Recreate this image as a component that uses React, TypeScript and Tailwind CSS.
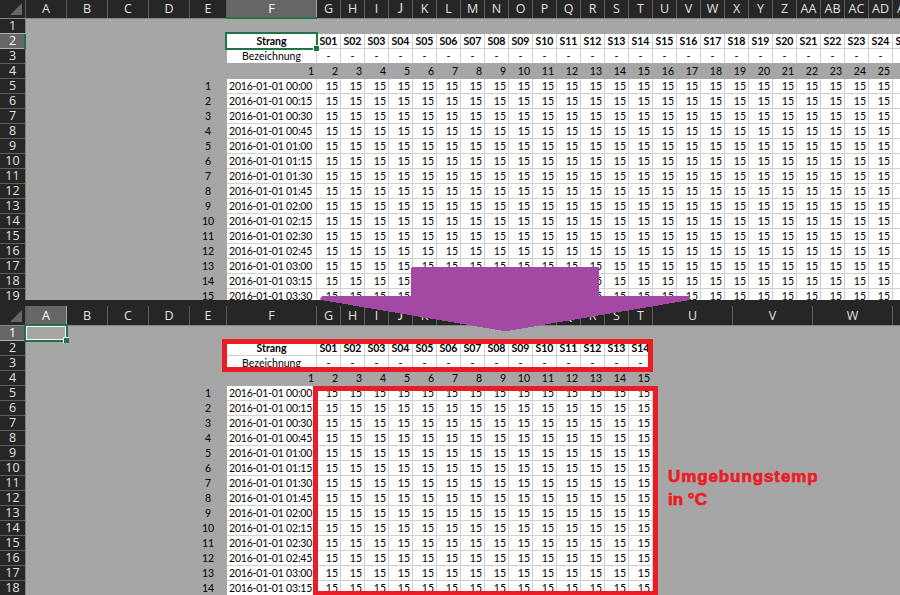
import React from "react";

type Column = { name: string; width: string };

const LEADING: Column[] = [
  { name: "A", width: "w-[41px]" },
  { name: "B", width: "w-[41px]" },
  { name: "C", width: "w-[41px]" },
  { name: "D", width: "w-[41px]" },
  { name: "E", width: "w-[37px]" },
  { name: "F", width: "w-[90px]" },
];

const narrow = (names: string[]): Column[] => names.map((name) => ({ name, width: "w-6" }));

const TOP_COLUMNS = [
  ...LEADING,
  ...narrow("G H I J K L M N O P Q R S T U V W X Y Z AA AB AC AD AE".split(" ")),
];

const BOTTOM_COLUMNS = [
  ...LEADING,
  ...narrow("G H I J K L M N O P Q R S T".split(" ")),
  { name: "U", width: "w-20" },
  { name: "V", width: "w-20" },
  { name: "W", width: "w-20" },
  { name: "", width: "w-2" },
];

const pad = (n: number) => String(n).padStart(2, "0");

const timestamp = (i: number) => `2016-01-01 ${pad(Math.floor(i / 4))}:${pad((i % 4) * 15)}`;

function HeaderCell({ col, selected }: { col: Column; selected: boolean }) {
  return (
    <div
      className={`flex h-full shrink-0 items-end justify-center border-r ${col.width} ${
        selected ? "border-[#a6a6a6] bg-[#666666] text-white" : "border-[#5c5c5c] text-[#e0e0e0]"
      }`}
    >
      <span className={`leading-[18px] ${col.name === "J" ? "font-['Lato',sans-serif]" : ""}`}>
        {col.name}
      </span>
    </div>
  );
}

function ColumnHeader({
  columns,
  selected,
  height,
}: {
  columns: Column[];
  selected: string;
  height: string;
}) {
  return (
    <div
      className={`flex ${height} shrink-0 border-b border-[#868686] bg-[#262626] font-['Open_Sans',sans-serif] text-[12.5px]`}
    >
      <div className="flex w-[26px] shrink-0 items-end justify-end border-r border-[#5c5c5c] pr-[3px] pb-[3px]">
        <svg width="12" height="12" viewBox="0 0 12 12">
          <path d="M12 0V12H0Z" fill="#666666" />
        </svg>
      </div>
      {columns.map((c) => (
        <HeaderCell key={c.name} col={c} selected={c.name === selected} />
      ))}
    </div>
  );
}

function RowNumber({ n, selectedRow }: { n: number; selectedRow: number }) {
  const selected = n === selectedRow;
  const edge = selected || n + 1 === selectedRow ? "border-b-[#b0b0b0]" : "border-b-[#5f5f5f]";
  return (
    <div
      className={`flex h-full w-[26px] shrink-0 justify-center border-r border-b border-r-[#808080] font-['Open_Sans',sans-serif] text-[12.5px] ${edge} ${
        selected ? "bg-[#666666] text-white" : "bg-[#262626] text-[#e0e0e0]"
      }`}
    >
      <span className="leading-[14px]">{n}</span>
    </div>
  );
}

const base = "h-full shrink-0 whitespace-nowrap leading-[15px]";

function Cell({ row, index, col }: { row: number; index: number; col: Column }) {
  const series = index - 5;
  if (row === 1 || index < 4) return <div className={`${base} ${col.width}`} />;
  if (index === 4)
    return <div className={`${base} ${col.width} pr-px text-center`}>{row > 4 ? row - 4 : ""}</div>;
  if (row === 4)
    return <div className={`${base} ${col.width} pr-[3px] text-right`}>{series + 1}</div>;

  const white = `${base} ${col.width} border-r border-b border-r-[#d0d0d0] bg-white`;
  if (row === 2)
    return (
      <div className={`${white} flex justify-center border-b-[#d0d0d0] font-bold`}>
        <span>{series === 0 ? "Strang" : `S${pad(series)}`}</span>
      </div>
    );
  if (row === 3)
    return (
      <div className={`${white} border-b-[#a6a6a6] text-center`}>
        {series === 0 ? "Bezeichnung" : "-"}
      </div>
    );
  return series === 0 ? (
    <div className={`${white} border-b-[#d0d0d0] pl-[2px] text-left tracking-[-0.19px]`}>
      {timestamp(row - 5)}
    </div>
  ) : (
    <div className={`${white} border-b-[#d0d0d0] pr-[2px] text-right`}>15</div>
  );
}

type SheetProps = {
  columns: Column[];
  dataColumns: number;
  rows: number;
  selectedColumn: string;
  selectedRow: number;
  headerHeight: string;
};

function Sheet({ columns, dataColumns, rows, selectedColumn, selectedRow, headerHeight }: SheetProps) {
  return (
    <div className="flex flex-col">
      <ColumnHeader columns={columns} selected={selectedColumn} height={headerHeight} />
      {Array.from({ length: rows }, (_, r) => (
        <div key={r} className="flex h-[15px] shrink-0">
          <RowNumber n={r + 1} selectedRow={selectedRow} />
          {columns.slice(0, dataColumns).map((c, i) => (
            <Cell key={c.name} row={r + 1} index={i} col={c} />
          ))}
        </div>
      ))}
    </div>
  );
}

export default function App() {
  return (
    <div className="relative h-[595px] w-[900px] overflow-hidden bg-[#a6a6a6] font-['Lato','Open_Sans',sans-serif] text-[10.5px] text-black">
      <section className="h-[300px] overflow-hidden">
        <Sheet
          columns={TOP_COLUMNS}
          dataColumns={31}
          rows={19}
          selectedColumn="F"
          selectedRow={2}
          headerHeight="h-[19px]"
        />
      </section>
      <section className="h-[295px] overflow-hidden">
        <div className="h-[6px] bg-[#262626]" />
        <Sheet
          columns={BOTTOM_COLUMNS}
          dataColumns={20}
          rows={18}
          selectedColumn="A"
          selectedRow={1}
          headerHeight="h-[20px]"
        />
      </section>

      {/* Active cell in the upper sheet */}
      <div className="absolute top-[17px] left-[226px] h-[2px] w-[91px] bg-[#217346]" />
      <div className="absolute top-[34px] left-[24px] h-[15px] w-[2px] bg-[#217346]" />
      <div className="absolute top-[32px] left-[225px] h-[18px] w-[93px] border-2 border-[#217346]" />
      <div className="absolute top-[45px] left-[313px] size-[6px] border-t border-l border-white bg-[#217346]" />

      {/* Active cell in the lower sheet */}
      <div className="absolute top-[324px] left-[24px] h-[18px] w-[44px] border-2 border-[#217346]">
        <div className="h-full border border-white" />
      </div>
      <div className="absolute top-[337px] left-[63px] size-[6px] border-t border-l border-white bg-[#217346]" />

      <svg
        className="absolute top-[267px] left-[320px]"
        width="371"
        height="65"
        viewBox="0 0 371 65"
        shapeRendering="crispEdges"
      >
        <path d="M91 1H92V0H278L279 1V29H369L370 31V33L187 64H184L1 33L0 31L2 29H91Z" fill="#a349a4" />
      </svg>

      <div className="absolute top-[339px] left-[222px] h-[33px] w-[431px] border-5 border-[#ed1c24]" />
      <div className="absolute top-[386px] left-[313px] h-[210px] w-[345px] border-5 border-[#ed1c24]" />
      <div className="absolute top-[465px] left-[668px] flex flex-col font-['Liberation_Sans',Arial,sans-serif] text-[17px] leading-[23px] font-black text-[#ed1c24] [-webkit-text-stroke:0.7px_#ed1c24]">
        <span className="tracking-[0.9px]">Umgebungstemp</span>
        <span>in °C</span>
      </div>
    </div>
  );
}
